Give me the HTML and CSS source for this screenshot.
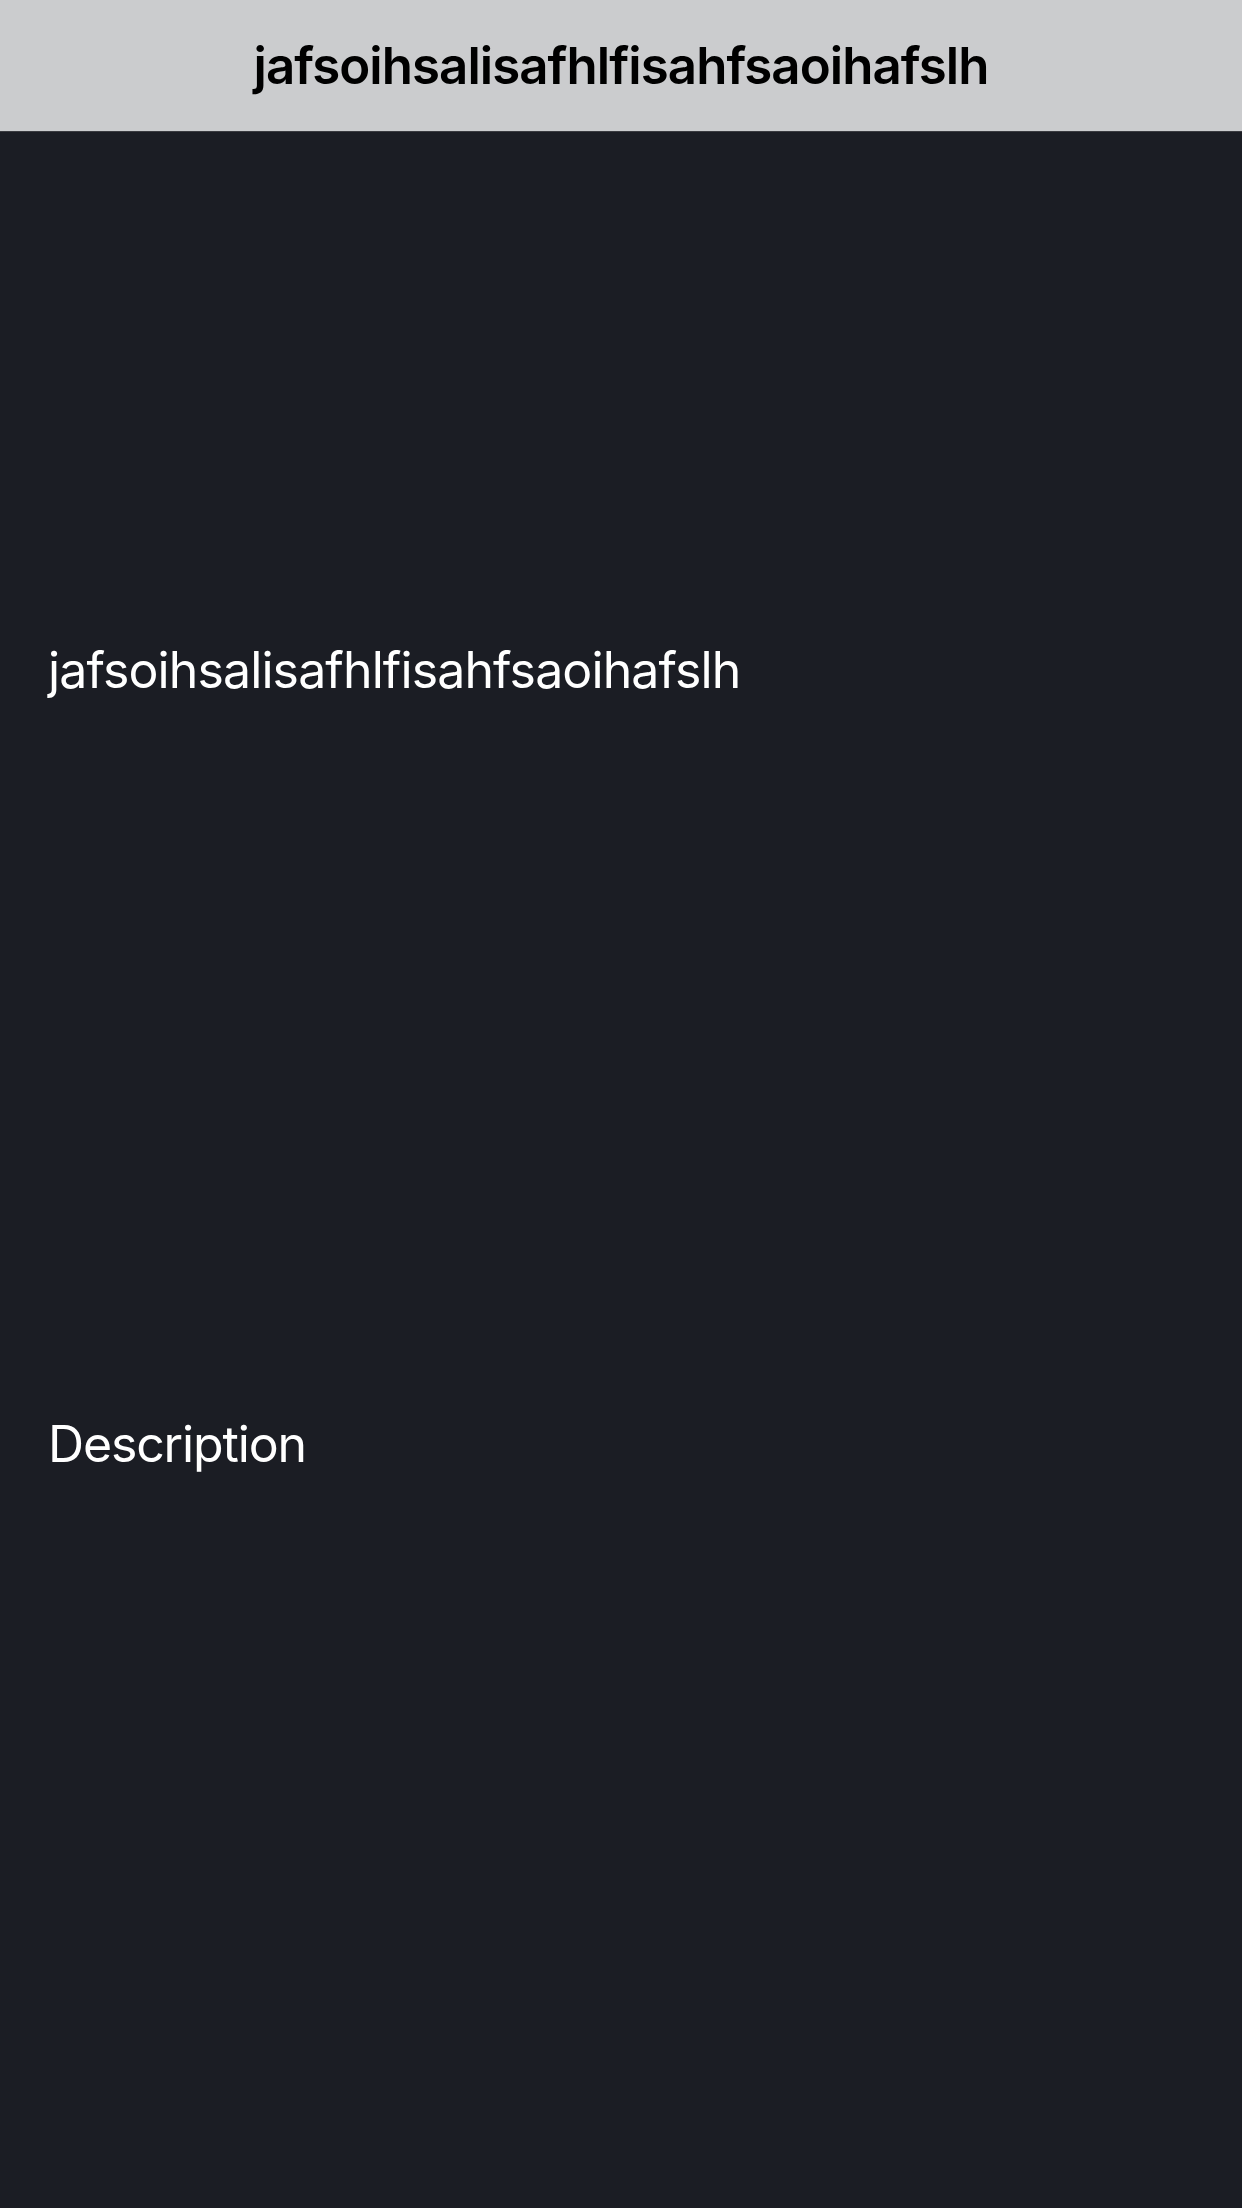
FILE: index.html
```html
<!DOCTYPE html>
<html>
<head>
<meta charset="utf-8">
<link rel="stylesheet" href="styles.css">
</head>
<body>
<header class="navbar">
  <h1 class="navbar-title">jafsoihsalisafhlfisahfsaoihafslh</h1>
</header>
<main class="content">
  <p class="item-title">jafsoihsalisafhlfisahfsaoihafslh</p>
  <p class="section-label">Description</p>
</main>
</body>
</html>
```
FILE: styles.css
```css
html, body {
  margin: 0;
  padding: 0;
  background: #1b1d24;
}
body {
  width: 1242px;
  height: 2208px;
  overflow: hidden;
  font-family: Inter, "Noto Sans", sans-serif;
}
.navbar {
  height: 131px;
  background: #cbccce;
  border-bottom: 1px solid #3a3b40;
  display: flex;
  align-items: center;
  justify-content: center;
}
.navbar-title {
  margin: 0;
  font-size: 51px;
  line-height: 61px;
  font-weight: 600;
  color: #000;
  letter-spacing: -0.95px;
}
.content {
  padding: 508px 48px 0;
  color: #fff;
}
.item-title {
  margin: 0;
  font-size: 50px;
  line-height: 61px;
  font-weight: 400;
  letter-spacing: -0.88px;
}
.section-label {
  margin: 713px 0 0;
  font-size: 50px;
  line-height: 61px;
  font-weight: 400;
  letter-spacing: -1.15px;
}
```
